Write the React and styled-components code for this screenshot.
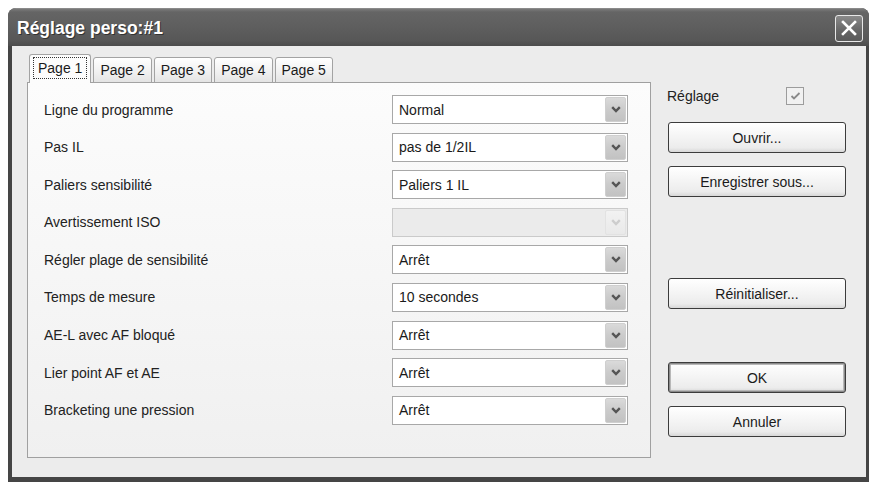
import React from 'react';
import styled, { createGlobalStyle } from 'styled-components';

const GlobalStyle = createGlobalStyle`
	html, body {
		margin: 0;
		padding: 0;
		background: #fff;
	}
	body {
		font-family: 'Liberation Sans', Arial, sans-serif;
	}
`;

const rows = [
	{ label: 'Ligne du programme', value: 'Normal' },
	{ label: 'Pas IL', value: 'pas de 1/2IL' },
	{ label: 'Paliers sensibilité', value: 'Paliers 1 IL' },
	{ label: 'Avertissement ISO', value: '', disabled: true },
	{ label: 'Régler plage de sensibilité', value: 'Arrêt' },
	{ label: 'Temps de mesure', value: '10 secondes' },
	{ label: 'AE-L avec AF bloqué', value: 'Arrêt' },
	{ label: 'Lier point AF et AE', value: 'Arrêt' },
	{ label: 'Bracketing une pression', value: 'Arrêt' },
];

const tabs = ['Page 1', 'Page 2', 'Page 3', 'Page 4', 'Page 5'];

const Chevron = ({ disabled }) => (
	<svg width="10" height="7" viewBox="0 0 10 7">
		<polyline
			points="1.2,1.2 5,5 8.8,1.2"
			fill="none"
			stroke={disabled ? '#cdcdcd' : '#555'}
			strokeWidth="2.4"
		/>
	</svg>
);

const Combo = ({ value, disabled }) => (
	<ComboBox disabled={disabled}>
		<ComboText>{value}</ComboText>
		<DropButton disabled={disabled}>
			<Chevron disabled={disabled} />
		</DropButton>
	</ComboBox>
);

const App = () => {
	return (
		<>
			<GlobalStyle />
			<Window>
				<TitleBar>
					<Title>Réglage perso:#1</Title>
					<CloseButton>
						<svg width="18" height="18" viewBox="0 0 18 18">
							<path d="M3 3 L15 15 M15 3 L3 15" stroke="#fff" strokeWidth="2.6" strokeLinecap="square" />
						</svg>
					</CloseButton>
				</TitleBar>
				<Client>
					<LeftCol>
						<TabStrip>
							{tabs.map((t, i) => (
								<Tab key={t} selected={i === 0}>
									{i === 0 ? <Focus>{t}</Focus> : t}
								</Tab>
							))}
						</TabStrip>
						<Panel>
							{rows.map((r) => (
								<Row key={r.label}>
									<Label>{r.label}</Label>
									<Combo value={r.value} disabled={r.disabled} />
								</Row>
							))}
						</Panel>
					</LeftCol>
					<RightCol>
						<CheckRow>
							<Label>Réglage</Label>
							<CheckBox>
								<svg width="11" height="10" viewBox="0 0 11 10">
									<polyline points="1.5,5 4,7.5 9.5,2" fill="none" stroke="#8a8a8a" strokeWidth="1.8" />
								</svg>
							</CheckBox>
						</CheckRow>
						<Button gap={17}>Ouvrir...</Button>
						<Button gap={13}>Enregistrer sous...</Button>
						<Button gap={81}>Réinitialiser...</Button>
						<Button gap={53} isDefault>
							OK
						</Button>
						<Button gap={13}>Annuler</Button>
					</RightCol>
				</Client>
			</Window>
		</>
	);
};

const Window = styled.div`
	margin: 8px 0 0 8px;
	width: 861px;
	height: 474px;
	box-sizing: border-box;
	background: #454545;
	border-radius: 8px 8px 0 0;
	padding: 0 3px 5px 4px;
	display: flex;
	flex-direction: column;
	overflow: hidden;
`;
const TitleBar = styled.div`
	height: 38px;
	flex: none;
	margin: 0 -3px 0 -4px;
	display: flex;
	align-items: center;
	justify-content: space-between;
	padding: 0 6px 0 9px;
	background: linear-gradient(#9a9a9a 0, #7a7a7a 1px, #656565 4px, #5e5e5e 50%, #575757 85%, #4c4c4c 100%);
`;
const Title = styled.div`
	color: #fff;
	font-family: 'Liberation Sans', Arial, sans-serif;
	font-weight: bold;
	font-size: 17.5px;
	margin-top: 3px;
	text-shadow: 1px 1px 0 #333;
`;
const CloseButton = styled.div`
	width: 26px;
	height: 25px;
	margin-top: 2px;
	border: 1px solid #e8e8e8;
	border-radius: 3px;
	background: linear-gradient(#8a8a8a, #666 60%, #5a5a5a);
	display: flex;
	align-items: center;
	justify-content: center;
`;
const Client = styled.div`
	flex: 1;
	background: #ececec;
	display: flex;
	padding: 9px 0 0 15px;
`;
const LeftCol = styled.div`
	width: 624px;
	display: flex;
	flex-direction: column;
`;
const TabStrip = styled.div`
	display: flex;
	align-items: flex-end;
	height: 28px;
	padding-left: 2px;
	margin-bottom: -1px;
	position: relative;
	z-index: 1;
`;
const Tab = styled.div`
	box-sizing: border-box;
	height: ${(p) => (p.selected ? '29px' : '26px')};
	padding: 0 ${(p) => (p.selected ? '3px' : '6px')};
	margin-right: 2px;
	display: flex;
	align-items: center;
	font-size: 14px;
	color: #1a1a1a;
	border: 1px solid #a3a3a3;
	border-bottom: ${(p) => (p.selected ? 'none' : '1px solid #a3a3a3')};
	border-radius: 3px 3px 0 0;
	background: ${(p) => (p.selected ? '#fcfcfc' : 'linear-gradient(#ffffff, #f0f0f0 60%, #e4e4e4)')};
	padding-bottom: ${(p) => (p.selected ? '3px' : '0')};
`;
const Focus = styled.span`
	border: 1px dotted #333;
	padding: 2px 4px;
	line-height: 16px;
`;
const Panel = styled.div`
	box-sizing: border-box;
	height: 376px;
	border: 1px solid #a0a0a0;
	background: linear-gradient(#fcfcfc, #f5f5f5 60%, #f0f0f0);
	display: flex;
	flex-direction: column;
	gap: 8.6px;
	padding: 12px 22px 0 16px;
`;
const Row = styled.div`
	display: flex;
	align-items: center;
	justify-content: space-between;
	height: 29px;
`;
const Label = styled.div`
	font-size: 14px;
	color: #222;
`;
const ComboBox = styled.div`
	box-sizing: border-box;
	width: 236px;
	height: 29px;
	border: 1px solid ${(p) => (p.disabled ? '#cacaca' : '#a8a8a8')};
	background: ${(p) => (p.disabled ? '#ebebeb' : '#fff')};
	display: flex;
	align-items: center;
	padding: 1px;
`;
const ComboText = styled.div`
	flex: 1;
	padding-left: 5px;
	font-size: 14px;
	color: #1a1a1a;
`;
const DropButton = styled.div`
	width: 21px;
	height: 25px;
	border-radius: 2px;
	display: flex;
	align-items: center;
	justify-content: center;
	background: ${(p) =>
		p.disabled ? 'linear-gradient(#f2f2f2, #e9e9e9)' : 'linear-gradient(#dadada, #cbcbcb 50%, #c2c2c2)'};
	border: 1px solid ${(p) => (p.disabled ? '#e2e2e2' : '#cfcfcf')};
	box-sizing: border-box;
`;
const RightCol = styled.div`
	width: 178px;
	margin-left: 17px;
	padding-top: 32px;
	display: flex;
	flex-direction: column;
`;
const CheckRow = styled.div`
	display: flex;
	align-items: center;
	justify-content: space-between;
	height: 18px;
	padding-right: 42px;
	margin-left: -1px;
`;
const CheckBox = styled.div`
	box-sizing: border-box;
	width: 18px;
	height: 18px;
	border: 1px solid #9c9c9c;
	background: #f1f1f1;
	display: flex;
	align-items: center;
	justify-content: center;
`;
const Button = styled.div`
	box-sizing: border-box;
	margin-top: ${(p) => p.gap}px;
	height: 31px;
	border: 1px solid #3c3c3c;
	border-radius: 3px;
	background: linear-gradient(#ffffff, #f6f6f6 40%, #ececec 85%, #d8d8d8);
	box-shadow: ${(p) => (p.isDefault ? 'inset 0 0 0 1px #8a8a8a, inset 0 0 0 2px #b8b8b8' : 'none')};
	display: flex;
	align-items: center;
	justify-content: center;
	font-size: 14px;
	color: #1a1a1a;
`;

export default App;
